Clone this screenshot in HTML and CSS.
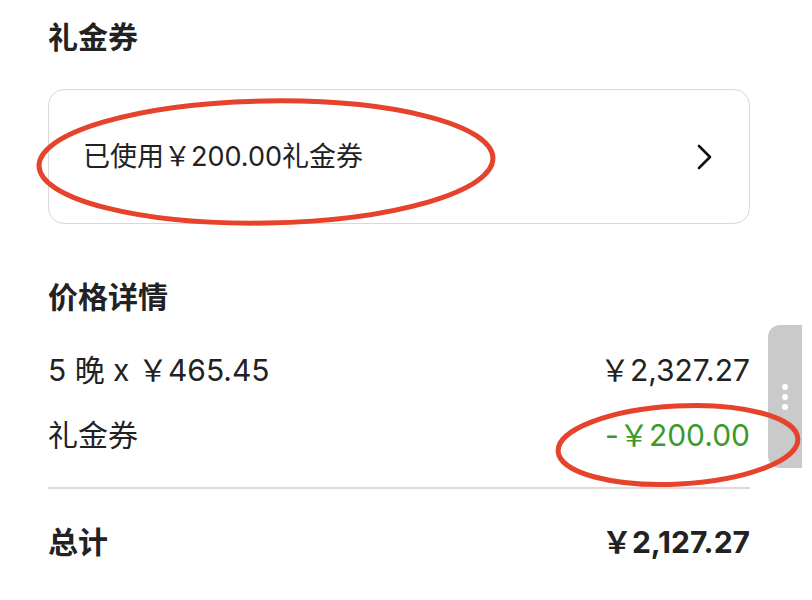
FILE: index.html
```html
<!DOCTYPE html>
<html lang="zh-CN">
<head>
  <meta charset="UTF-8" />
  <title>礼金券 - 价格详情</title>
  <link rel="stylesheet" href="styles.css">
</head>
<body>
  <div class="page">
    <h2 class="section-title">礼金券</h2>

    <div class="coupon-card">
      <span class="coupon-text">已使用￥200.00礼金券</span>
      <svg class="chevron" width="16" height="26" viewBox="0 0 16 26">
        <path d="M2 2 L13 13 L2 24" fill="none" stroke="#111" stroke-width="2.6" stroke-linecap="round" stroke-linejoin="round"/>
      </svg>
    </div>

    <h2 class="section-title title-price">价格详情</h2>

    <div class="detail-row">
      <span>5 晚 x ￥465.45</span>
      <span>￥2,327.27</span>
    </div>
    <div class="detail-row">
      <span>礼金券</span>
      <span class="discount">-￥200.00</span>
    </div>

    <div class="divider"></div>

    <div class="detail-row total-row">
      <span>总计</span>
      <span>￥2,127.27</span>
    </div>
  </div>

  <div class="side-handle">
    <span></span><span></span><span></span>
  </div>

  <!-- annotation marks drawn on top of the screenshot -->
  <svg class="marks" width="812" height="600" viewBox="0 0 812 600">
    <ellipse cx="266" cy="162" rx="227" ry="61" transform="rotate(-1 266 162)" fill="none" stroke="#e5432b" stroke-width="5"/>
    <ellipse cx="678" cy="445" rx="120" ry="39" transform="rotate(-3 678 445)" fill="none" stroke="#e5432b" stroke-width="5"/>
  </svg>
</body>
</html>
```

FILE: styles.css
```css
body {
  margin: 0;
  background-color: #fff;
  color: #222;
  font-family: Inter, "Noto Sans CJK SC", sans-serif;
  overflow: hidden;
}
.page {
  padding: 14px 62px 0 48px;
}
.section-title {
  margin: 0 0 29px;
  font-size: 30px;
  font-weight: 600;
  line-height: 46px;
}
.title-price {
  margin-top: 50px;
  margin-bottom: 18px;
}
.coupon-card {
  display: flex;
  align-items: center;
  justify-content: space-between;
  height: 133px;
  padding: 0 36px 0 34px;
  border: 1px solid #d9d9d9;
  border-radius: 16px;
}
.coupon-text {
  font-size: 27px;
  line-height: 34px;
}
.chevron {
  display: block;
}
.detail-row {
  display: flex;
  justify-content: space-between;
  align-items: center;
  padding: 12px 0;
  font-size: 30px;
  line-height: 41px;
}
.discount {
  color: #3a9a2c;
}
.divider {
  height: 2px;
  margin: 19px 0 21px;
  background-color: #dcdcdc;
}
.total-row {
  font-weight: 700;
}
.side-handle {
  position: absolute;
  top: 325px;
  left: 768px;
  width: 34px;
  height: 143px;
  display: flex;
  flex-direction: column;
  align-items: center;
  justify-content: center;
  gap: 4px;
  background-color: #cacaca;
  border-radius: 12px 0 0 12px;
}
.side-handle span {
  width: 6px;
  height: 6px;
  border-radius: 50%;
  background-color: #fff;
}
.marks {
  position: absolute;
  top: 0;
  left: 0;
  pointer-events: none;
}
```
